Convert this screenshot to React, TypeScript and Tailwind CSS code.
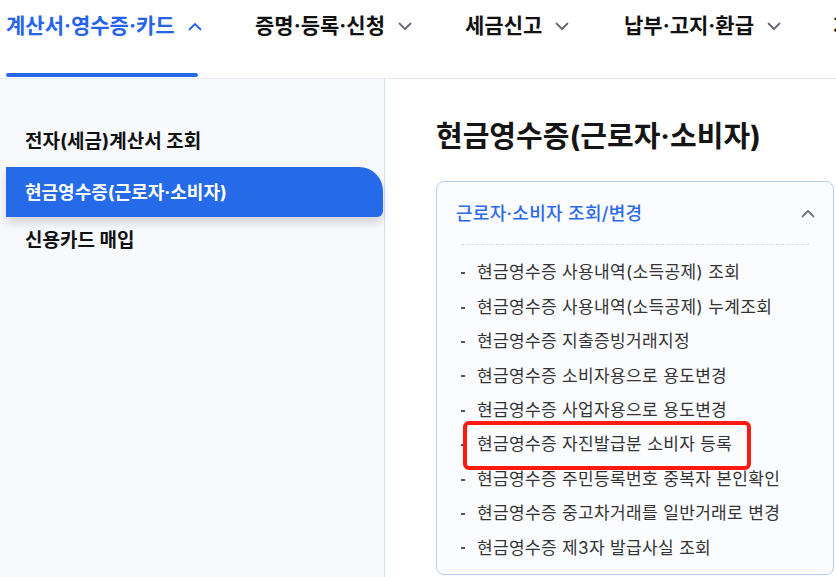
const font = { fontFamily: '"Inter", "Noto Sans CJK KR", "Noto Sans", sans-serif' };

const Chevron = ({ up, className }: { up?: boolean; className?: string }) => (
  <svg width="14" height="9" viewBox="0 0 14 9" className={className} fill="none">
    <path
      d={up ? "M1.5 7.5L7 2l5.5 5.5" : "M1.5 1.5L7 7l5.5-5.5"}
      stroke="currentColor"
      strokeWidth="1.8"
      strokeLinecap="round"
      strokeLinejoin="round"
    />
  </svg>
);

const navItems = [
  { label: "증명·등록·신청", w: "w-[210px]" },
  { label: "세금신고", w: "w-[159px]" },
  { label: "납부·고지·환급", w: "w-[209px]" },
];

const items = [
  "현금영수증 사용내역(소득공제) 조회",
  "현금영수증 사용내역(소득공제) 누계조회",
  "현금영수증 지출증빙거래지정",
  "현금영수증 소비자용으로 용도변경",
  "현금영수증 사업자용으로 용도변경",
  "현금영수증 자진발급분 소비자 등록",
  "현금영수증 주민등록번호 중복자 본인확인",
  "현금영수증 중고차거래를 일반거래로 변경",
  "현금영수증 제3자 발급사실 조회",
];

export default function App() {
  return (
    <div className="w-[836px] h-[577px] overflow-hidden bg-white text-[#111]" style={font}>
      {/* top nav */}
      <nav className="h-[79px] border-b border-[#e6e8ec] flex items-start pl-[6px] whitespace-nowrap overflow-hidden">
        <div className="relative h-[78px] w-[249px] shrink-0 flex">
          <div className="flex items-center h-[52px] gap-[13px] text-[#2563eb] text-[21px] font-bold">
            계산서·영수증·카드
            <Chevron up className="text-[#2563eb]" />
          </div>
          <div className="absolute left-0 bottom-[1px] w-[192px] h-[4px] rounded-sm bg-[#2569e8]" />
        </div>
        {navItems.map((n) => (
          <div key={n.label} className={`${n.w} shrink-0 flex items-center h-[52px] gap-[13px] text-[21px] font-bold`}>
            {n.label}
            <Chevron className="text-[#666a75]" />
          </div>
        ))}
        <div className="shrink-0 flex items-center h-[52px] text-[21px] font-bold">지</div>
      </nav>

      <div className="flex h-[498px]">
        {/* sidebar */}
        <aside className="w-[385px] shrink-0 bg-[#f8f9fd] border-r border-[#cfe0fb] pt-[38px]">
          <div className="h-[50px] flex items-center pl-[25px] text-[19px] font-bold">
            전자(세금)계산서 조회
          </div>
          <div className="ml-[6px] mr-[1px] h-[50px] flex items-center pl-[19px] text-[18px] font-bold text-white bg-[#256be9] rounded-tr-[24px] rounded-br-[6px] shadow-[0_6px_10px_rgba(0,0,0,0.15)]">
            현금영수증(근로자·소비자)
          </div>
          <div className="h-[49px] flex items-center pl-[25px] text-[19px] font-bold">
            신용카드 매입
          </div>
        </aside>

        {/* main */}
        <main className="flex-1 pl-[51px] pr-[2px]">
          <h1 className="mt-[36px] h-[44px] flex items-center text-[29px] font-bold text-[#151515]">
            현금영수증(근로자·소비자)
          </h1>
          <div className="mt-[22px] h-[394px] border border-[#b7ccef] rounded-[8px] bg-[#fbfcff] px-[24px]">
            <div className="flex items-center justify-between h-[62px] pt-[1px]">
              <span className="text-[18px] tracking-[0.3px] font-medium text-[#2b6ae8] -ml-[5px]">
                근로자·소비자 조회/변경
              </span>
              <Chevron up className="text-[#777] mr-[-6px]" />
            </div>
            <div className="border-t border-dashed border-[#d8dce3]" />
            <ul className="pt-[11px] relative">
              {items.map((t, i) => (
                <li key={t} className="relative h-[34.4px] flex items-center text-[17px] tracking-[0.35px] text-[#333]">
                  <span className="w-[16px] flex items-center">
                    <span className="block w-[4px] h-[2px] bg-[#555]" />
                  </span>
                  {t}
                  {i === 5 && (
                    <div className="absolute left-[2px] top-[-7px] w-[288px] h-[49px] border-[4px] border-[#ff1a10] rounded-[6px]" />
                  )}
                </li>
              ))}
            </ul>
          </div>
        </main>
      </div>
    </div>
  );
}
